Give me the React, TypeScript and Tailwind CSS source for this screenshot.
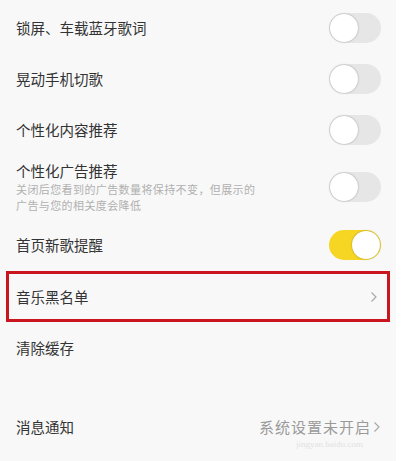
import React from "react";

const font = { fontFamily: '"Noto Sans CJK SC", "Noto Sans", sans-serif' };

function Toggle({ on }: { on?: boolean }) {
  return (
    <div
      className={`relative h-[30px] w-[52px] shrink-0 rounded-full ${
        on ? "bg-[#f6d623]" : "bg-[#e6e6e6]"
      }`}
    >
      <div
        className={`absolute top-[1px] h-[28px] w-[28px] rounded-full bg-white shadow-[0_0_2px_rgba(0,0,0,0.35)] ${
          on ? "right-[1px]" : "left-[1px]"
        }`}
      />
    </div>
  );
}

function Chevron() {
  return (
    <svg width="8" height="12" viewBox="0 0 8 12" className="shrink-0">
      <path d="M1.5 1.5 L6 6 L1.5 10.5" fill="none" stroke="#a8a8a8" strokeWidth="1.2" />
    </svg>
  );
}

function Row({ label, children }: { label: string; children?: React.ReactNode }) {
  return (
    <div className="flex h-[51px] items-center justify-between pl-4 pr-[15px]">
      <span className="text-[14.5px] text-[#333]">{label}</span>
      {children}
    </div>
  );
}

export default function App() {
  return (
    <div className="flex h-[461px] w-[408px] bg-white" style={font}>
      <div className="relative w-[396px] bg-[#f8f8f8] pt-[2px]">
        <Row label="锁屏、车载蓝牙歌词">
          <Toggle />
        </Row>
        <Row label="晃动手机切歌">
          <Toggle />
        </Row>
        <Row label="个性化内容推荐">
          <Toggle />
        </Row>
        <div className="flex h-[64px] items-center justify-between pl-4 pr-[15px]">
          <div className="flex flex-col">
            <span className="text-[14.5px] leading-[20px] text-[#333]">个性化广告推荐</span>
            <span className="text-[11px] leading-[16px] tracking-[0.4px] text-[#b0b0b0]">
              <span className="block">关闭后您看到的广告数量将保持不变，但展示的</span>
              <span className="block">广告与您的相关度会降低</span>
            </span>
          </div>
          <Toggle />
        </div>
        <div className="flex h-[52px] items-center justify-between pl-4 pr-[15px]">
          <span className="text-[14.5px] text-[#333]">首页新歌提醒</span>
          <Toggle on />
        </div>
        <div className="ml-[6px] mr-[6px] flex h-[51px] items-center justify-between border-[3px] border-[#c9151e] pl-[7px] pr-[9px]">
          <span className="text-[14.5px] text-[#333]">音乐黑名单</span>
          <Chevron />
        </div>
        <div className="flex h-[52px] items-center pl-4">
          <span className="text-[14.5px] text-[#333]">清除缓存</span>
        </div>
        <div className="mt-[27px] flex h-[52px] items-center justify-between pl-4 pr-[15px]">
          <span className="text-[14.5px] text-[#333]">消息通知</span>
          <div className="flex items-center gap-[2px]">
            <span className="text-[15px] tracking-[1px] text-[#9a9a9a]">系统设置未开启</span>
            <Chevron />
          </div>
        </div>
        <span
          className="absolute left-[296px] top-[438px] text-[9px] text-[#e2e2e2]"
          style={{ fontFamily: '"Liberation Serif", serif' }}
        >
          jingyan.baidu.com
        </span>
      </div>
    </div>
  );
}
